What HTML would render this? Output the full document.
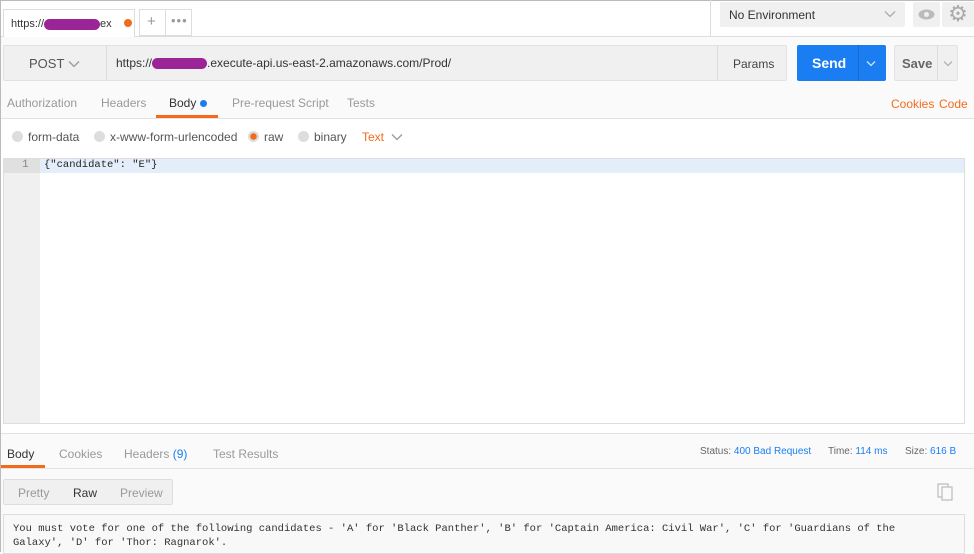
<!DOCTYPE html>
<html><head><style>
*{box-sizing:border-box;margin:0;padding:0}
body{width:974px;height:552px;overflow:hidden;background:#fafafa;font-family:"Liberation Sans",sans-serif;font-size:12px;color:#505050;position:relative}
.a{position:absolute}
.mono{font-family:"Liberation Mono",monospace}
.blob{display:inline-block;background:#9b2497;border-radius:6px;height:11px;vertical-align:middle}
.rad{display:inline-block;width:11px;height:11px;border-radius:50%;background:#ddd;vertical-align:-1px;margin-right:5px}
.chev{position:absolute}
</style></head><body>
<!-- top bar -->
<div class="a" style="left:0;top:0;width:974px;height:37px;background:#fff;border-top:1px solid #bbb;border-bottom:1px solid #ddd"></div>
<div class="a" style="left:3px;top:9px;width:132px;height:28px;background:#fff;border:1px solid #ddd;border-bottom:none;font-size:11px;color:#333;padding:8px 0 0 7px">https://<span class="blob" style="width:56px"></span>ex<span style="display:inline-block;width:8px;height:8px;border-radius:50%;background:#f26b1d;margin-left:12px"></span></div>
<div class="a" style="left:139px;top:9px;width:53px;height:27px;border:1px solid #ddd;background:#fff"></div>
<div class="a" style="left:165px;top:9px;width:1px;height:27px;background:#ddd"></div>
<div class="a" style="left:147px;top:13px;font-size:15px;color:#999">+</div>
<div class="a" style="left:171px;top:13px;font-size:13px;color:#999;letter-spacing:1px">•••</div>
<div class="a" style="left:710px;top:0;width:1px;height:37px;background:#ddd"></div>
<div class="a" style="left:720px;top:2px;width:185px;height:25px;background:#f0f0f0;border-radius:2px;padding:6px 9px;color:#333">No Environment</div>
<svg class="chev" style="left:884px;top:10px" width="12" height="8"><path d="M1 1.5L6 6.5L11 1.5" fill="none" stroke="#aaa" stroke-width="1.3"/></svg>
<div class="a" style="left:913px;top:2px;width:27px;height:25px;background:#f0f0f0;border-radius:2px"><svg width="27" height="25"><ellipse cx="13.5" cy="12.5" rx="8" ry="5" fill="#bbb"/><circle cx="13.5" cy="12.5" r="2.5" fill="#f0f0f0"/></svg></div>
<div class="a" style="left:942px;top:2px;width:32px;height:25px;background:#f0f0f0;border-radius:2px;color:#aaa;font-size:22px;text-align:center;line-height:24px">&#9881;</div>
<!-- request row -->
<div class="a" style="left:3px;top:45px;width:784px;height:36px;background:#f0f0f0;border:1px solid #e2e2e2;border-radius:2px"></div>
<div class="a" style="left:106px;top:45px;width:1px;height:36px;background:#ddd"></div>
<div class="a" style="left:717px;top:45px;width:1px;height:36px;background:#ddd"></div>
<div class="a" style="left:29px;top:56px;font-size:13px;color:#555">POST</div>
<svg class="chev" style="left:68px;top:60px" width="12" height="8"><path d="M1 1.5L6 6.5L11 1.5" fill="none" stroke="#999" stroke-width="1.3"/></svg>
<div class="a" style="left:116px;top:56px;color:#333">https://<span class="blob" style="width:55px"></span>.execute-api.us-east-2.amazonaws.com/Prod/</div>
<div class="a" style="left:733px;top:57px;color:#444">Params</div>
<div class="a" style="left:797px;top:45px;width:89px;height:36px;background:#1a7ef2;border-radius:2px"></div>
<div class="a" style="left:858px;top:45px;width:1px;height:36px;background:#1769cc"></div>
<div class="a" style="left:812px;top:55px;color:#fff;font-weight:bold;font-size:14px">Send</div>
<svg class="chev" style="left:866px;top:60px" width="10" height="7"><path d="M1 1.5L5 5.5L9 1.5" fill="none" stroke="#cfe2ff" stroke-width="1.3"/></svg>
<div class="a" style="left:894px;top:45px;width:64px;height:36px;background:#f0f0f0;border:1px solid #e2e2e2;border-radius:2px"></div>
<div class="a" style="left:937px;top:45px;width:1px;height:36px;background:#ddd"></div>
<div class="a" style="left:902px;top:56px;color:#666;font-weight:bold;font-size:13px">Save</div>
<svg class="chev" style="left:943px;top:60px" width="10" height="7"><path d="M1 1.5L5 5.5L9 1.5" fill="none" stroke="#aaa" stroke-width="1.2"/></svg>
<!-- tabs -->
<div class="a" style="left:7px;top:96px;color:#999">Authorization</div>
<div class="a" style="left:101px;top:96px;color:#999">Headers</div>
<div class="a" style="left:169px;top:96px;color:#333">Body <span style="display:inline-block;width:7px;height:7px;border-radius:50%;background:#1a7ef2"></span></div>
<div class="a" style="left:232px;top:96px;color:#999">Pre-request Script</div>
<div class="a" style="left:347px;top:96px;color:#999">Tests</div>
<div class="a" style="left:891px;top:97px;color:#f26b1d">Cookies</div>
<div class="a" style="left:939px;top:97px;color:#f26b1d">Code</div>
<div class="a" style="left:156px;top:115px;width:62px;height:3px;background:#f26b1d"></div>
<div class="a" style="left:0;top:118px;width:974px;height:1px;background:#e2e2e2"></div>
<div class="a" style="left:0;top:119px;width:974px;height:314px;background:#fff"></div>
<!-- radios -->
<div class="a" style="left:12px;top:130px;color:#555"><span class="rad"></span>form-data</div>
<div class="a" style="left:94px;top:130px;color:#555"><span class="rad"></span>x-www-form-urlencoded</div>
<div class="a" style="left:248px;top:130px;color:#555"><span class="rad" style="background:radial-gradient(circle,#f26b1d 3px,#ddd 3.5px)"></span>raw</div>
<div class="a" style="left:298px;top:130px;color:#555"><span class="rad"></span>binary</div>
<div class="a" style="left:362px;top:130px;color:#f26b1d">Text</div>
<svg class="chev" style="left:391px;top:133px" width="12" height="8"><path d="M1 1.5L6 6.5L11 1.5" fill="none" stroke="#999" stroke-width="1.3"/></svg>
<!-- editor -->
<div class="a" style="left:3px;top:158px;width:962px;height:266px;border:1px solid #ddd;background:#fff"></div>
<div class="a" style="left:4px;top:159px;width:36px;height:264px;background:#f0f0f0"></div>
<div class="a" style="left:4px;top:159px;width:960px;height:14px;background:#e4eefa"></div>
<div class="a" style="left:4px;top:159px;width:36px;height:14px;background:#e0e0e0"></div>
<div class="a mono" style="left:22px;top:159px;font-size:11px;color:#888">1</div>
<div class="a mono" style="left:44px;top:159px;font-size:10.5px;color:#222">{"candidate": "E"}</div>
<!-- response -->
<div class="a" style="left:0;top:433px;width:974px;height:1px;background:#e2e2e2"></div>
<div class="a" style="left:7px;top:447px;color:#333">Body</div>
<div class="a" style="left:59px;top:447px;color:#999">Cookies</div>
<div class="a" style="left:124px;top:447px;color:#999">Headers <span style="color:#1a7ef2">(9)</span></div>
<div class="a" style="left:213px;top:447px;color:#999">Test Results</div>
<div class="a" style="left:700px;top:446px;font-size:10px;color:#666">Status: <span style="color:#1a7ef2">400 Bad Request</span></div>
<div class="a" style="left:828px;top:446px;font-size:10px;color:#666">Time: <span style="color:#1a7ef2">114 ms</span></div>
<div class="a" style="left:905px;top:446px;font-size:10px;color:#666">Size: <span style="color:#1a7ef2">616 B</span></div>
<div class="a" style="left:0;top:465px;width:45px;height:3px;background:#f26b1d"></div>
<div class="a" style="left:0;top:468px;width:974px;height:1px;background:#e2e2e2"></div>
<div class="a" style="left:3px;top:479px;width:170px;height:26px;background:#f0f0f0;border:1px solid #ddd;border-radius:2px"></div>
<div class="a" style="left:18px;top:486px;color:#999">Pretty</div>
<div class="a" style="left:73px;top:486px;color:#333">Raw</div>
<div class="a" style="left:120px;top:486px;color:#999">Preview</div>
<svg class="a" style="left:937px;top:483px" width="18" height="18"><rect x="1" y="1" width="10" height="13" fill="none" stroke="#bbb" stroke-width="1.2"/><rect x="5" y="4" width="10" height="13" fill="#fafafa" stroke="#bbb" stroke-width="1.2"/></svg>
<div class="a" style="left:3px;top:514px;width:962px;height:40px;background:#f8f8f8;border:1px solid #ddd"></div>
<div class="a mono" style="left:13px;top:522px;font-size:10.5px;color:#333;line-height:14px;white-space:pre">You must vote for one of the following candidates - 'A' for 'Black Panther', 'B' for 'Captain America: Civil War', 'C' for 'Guardians of the
Galaxy', 'D' for 'Thor: Ragnarok'.</div>
<div class="a" style="left:0;top:0;width:1px;height:552px;background:#bbb"></div>
</body></html>
